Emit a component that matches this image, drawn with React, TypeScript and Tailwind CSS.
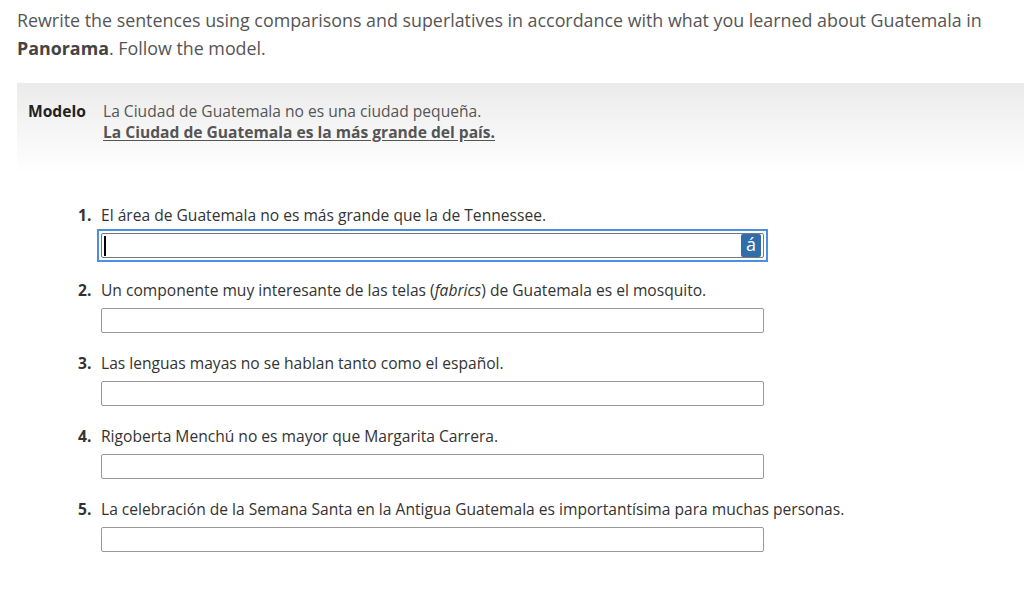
import React from 'react'

const questions: { n: number; text: React.ReactNode }[] = [
  { n: 1, text: 'El área de Guatemala no es más grande que la de Tennessee.' },
  {
    n: 2,
    text: (
      <>
        Un componente muy interesante de las telas (<i>fabrics</i>) de Guatemala es el mosquito.
      </>
    ),
  },
  { n: 3, text: 'Las lenguas mayas no se hablan tanto como el español.' },
  { n: 4, text: 'Rigoberta Menchú no es mayor que Margarita Carrera.' },
  {
    n: 5,
    text: 'La celebración de la Semana Santa en la Antigua Guatemala es importantísima para muchas personas.',
  },
]

const Question: React.FC<{ n: number; text: React.ReactNode; active?: boolean }> = ({ n, text, active }) => {
  return (
    <div className={active ? 'mb-[21px]' : 'mb-[19px]'}>
      <div className="flex items-baseline text-[15.6px] leading-[22px] text-[#333]">
        <span className="w-[23px] font-bold">{n}.</span>
        <span>{text}</span>
      </div>
      <div
        className={
          'relative mt-[7px] ml-[23px] w-[663px] h-[25px] rounded-[2px] border bg-white ' +
          (active ? 'border-[#777]' : 'border-[#999]')
        }
      >
        {active && (
          <>
            {/* focus ring */}
            <div className="absolute -inset-[5px] border-2 border-[#4a90e2] pointer-events-none" />
            <div className="absolute left-[2px] top-[2px] h-[20px] w-[2px] bg-black" />
            <div className="absolute right-[2px] top-[0px] h-[23px] w-[20px] rounded-[2px] bg-[#2f6eab] text-center text-[18px] leading-[21px] text-white">
              á
            </div>
          </>
        )}
      </div>
    </div>
  )
}

export default function App() {
  return (
    <div
      className="w-[1024px] h-[608px] overflow-hidden bg-white text-[#555]"
      style={{ fontFamily: '"Open Sans", sans-serif' }}
    >
      <p className="px-[17px] pt-[6px] text-[17.85px] leading-[28px] text-[#555]">
        Rewrite the sentences using comparisons and superlatives in accordance with what you learned about Guatemala in{' '}
        <b className="text-[#444]">Panorama</b>. Follow the model.
      </p>

      <div className="ml-[17px] mt-[21px] h-[90px] bg-gradient-to-b from-[#ebebeb] to-white flex pt-[18px] pl-[11px]">
        <span className="w-[75px] text-[15.6px] leading-[21px] font-bold text-[#222]">Modelo</span>
        <div className="text-[15.6px] leading-[21px] text-[#555]">
          <div>La Ciudad de Guatemala no es una ciudad pequeña.</div>
          <div className="font-bold underline underline-offset-2">La Ciudad de Guatemala es la más grande del país.</div>
        </div>
      </div>

      <div className="pl-[78px] pt-[31px]">
        {questions.map((q) => (
          <Question key={q.n} n={q.n} text={q.text} active={q.n === 1} />
        ))}
      </div>
    </div>
  )
}
